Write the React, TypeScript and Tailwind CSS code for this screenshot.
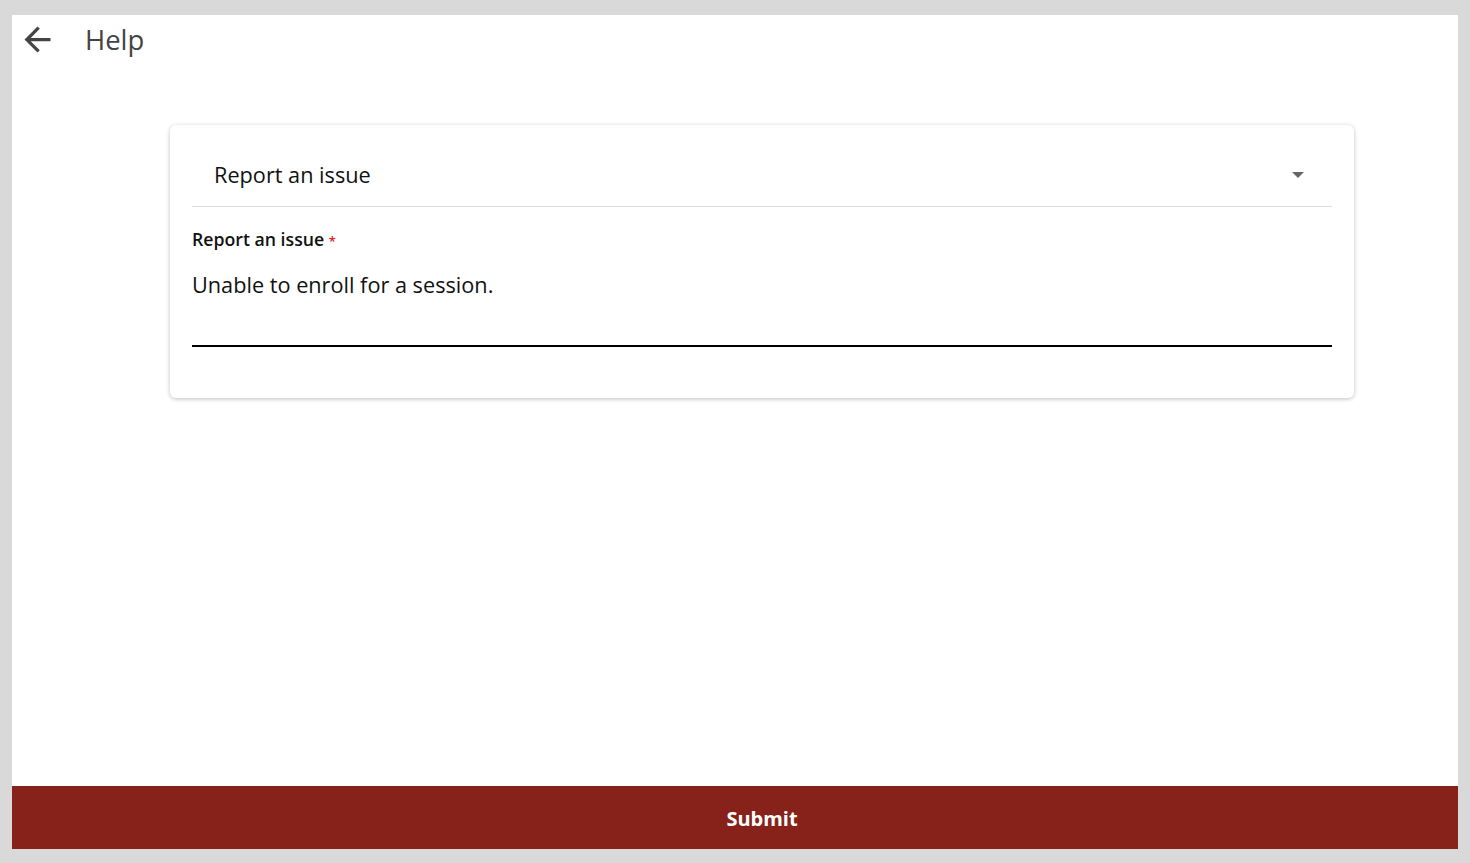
export default function App() {
  return (
    <div
      className="h-[863px] w-[1470px] bg-[#d9d9d9] pt-[15px] pb-[14px] pl-[12px] pr-[12px]"
      style={{ fontFamily: '"Open Sans", "Noto Sans", sans-serif' }}
    >
      <div className="flex h-full flex-col bg-white">
        <header className="flex h-[50px] items-center">
          <button className="ml-[6px] mt-[-2px] flex h-[39px] w-[39px] items-center justify-center text-[#444]">
            <svg width="39" height="39" viewBox="0 0 24 24" fill="currentColor">
              <path d="M20 11H7.83l5.59-5.59L12 4l-8 8 8 8 1.41-1.41L7.83 13H20v-2z" />
            </svg>
          </button>
          <h1 className="ml-[28px] text-[27.4px] font-medium text-[#444]">Help</h1>
        </header>

        <div className="flex flex-1 justify-center pl-[54px] pt-[60px]">
          <div className="h-[273px] w-[1184px] rounded-[6px] bg-white px-[22px] shadow-[0_1px_4px_rgba(0,0,0,0.25)]">
            <div className="flex h-[82px] items-center justify-between border-b border-[#dcdcdc] pl-[22px] pr-[28px] pt-[19px]">
              <span className="text-[21.7px] text-[#111]">Report an issue</span>
              <svg width="12" height="6" viewBox="0 0 12 6" className="mt-[-1px]">
                <path d="M0 0 L12 0 L6 6 Z" fill="#666" />
              </svg>
            </div>
            <div className="pt-[20px]">
              <label className="text-[17.7px] font-semibold leading-[24px] text-[#111]">
                Report an issue <span className="text-[13px] text-[#e0201b]">*</span>
              </label>
              <div className="mt-[16px] flex h-[78px] items-start border-b-2 border-black">
                <span className="text-[21.7px] text-[#111]">Unable to enroll for a session.</span>
              </div>
            </div>
          </div>
        </div>

        <button className="flex h-[63px] w-full items-center justify-center bg-[#862219] pl-[54px] pt-[2px] text-[20px] font-bold text-white">
          Submit
        </button>
      </div>
    </div>
  );
}
